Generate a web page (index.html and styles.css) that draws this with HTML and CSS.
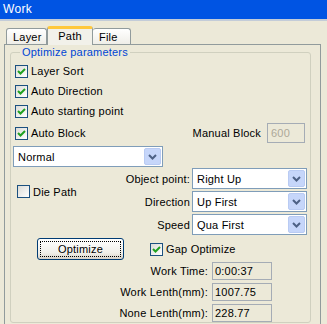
FILE: index.html
```html
<!DOCTYPE html>
<html lang="en">
<head>
    <meta charset="UTF-8">
    <title>Work</title>
    <link rel="stylesheet" href="styles.css">
</head>
<body>

    <div class="titlebar">Work</div>

    <div class="tabs">
        <div class="tab">Layer</div>
        <div class="tab active">Path</div>
        <div class="tab">File</div>
    </div>

    <div class="panel">
        <fieldset class="group">
            <legend>Optimize parameters</legend>

            <label class="check-row"><span class="box checked"></span>Layer Sort</label>
            <label class="check-row"><span class="box checked"></span>Auto Direction</label>
            <label class="check-row"><span class="box checked"></span>Auto starting point</label>
            <div class="check-row block-row">
                <label class="check-row"><span class="box checked"></span>Auto Block</label>
                <div class="manual">
                    <span>Manual Block</span>
                    <span class="field disabled">600</span>
                </div>
            </div>

            <div class="combo normal">Normal<span class="drop"></span></div>

            <div class="path-section">
                <label class="check-row die"><span class="box"></span>Die Path</label>
                <div class="opt-grid">
                    <span class="lbl">Object point:</span>
                    <div class="combo">Right Up<span class="drop"></span></div>
                    <span class="lbl">Direction</span>
                    <div class="combo">Up First<span class="drop"></span></div>
                    <span class="lbl">Speed</span>
                    <div class="combo">Qua First<span class="drop"></span></div>
                </div>
            </div>

            <div class="optimize-row">
                <button class="btn"><span>Optimize</span></button>
                <label class="check-row"><span class="box checked"></span>Gap Optimize</label>
            </div>

            <div class="stats">
                <span class="lbl">Work Time:</span>
                <span class="field">0:00:37</span>
                <span class="lbl">Work Lenth(mm):</span>
                <span class="field">1007.75</span>
                <span class="lbl">None Lenth(mm):</span>
                <span class="field">228.77</span>
            </div>
        </fieldset>
    </div>

</body>
</html>
```

FILE: styles.css
```css
body, html {
    margin: 0;
    padding: 0;
    width: 327px;
    height: 324px;
    overflow: hidden;
    background-color: #ece9d8;
    font-family: "Liberation Sans", Arial, sans-serif;
    font-size: 11px;
    letter-spacing: 0.2px;
    color: #000;
}

.titlebar {
    height: 19px;
    line-height: 19px;
    padding-left: 3px;
    background-color: #0054e3;
    color: #fff;
    font-size: 12px;
    letter-spacing: 0.3px;
    border-bottom: 2px solid #c3ccd8;
}

/* tab strip */
.tabs {
    display: flex;
    align-items: flex-end;
    height: 19px;
    margin-top: 4px;
    padding-left: 6px;
}

.tab {
    height: 16px;
    line-height: 16px;
    padding: 0 6px;
    border: 1px solid #919b9c;
    border-bottom: none;
    border-radius: 3px 3px 0 0;
    background: linear-gradient(#ffffff, #efeee8);
    box-sizing: border-box;
}

.tab:first-child {
    width: 41px;
}

.tab:last-child {
    width: 38px;
    border-left: none;
}

.tab.active {
    width: 46px;
    height: 19px;
    line-height: 15px;
    text-align: center;
    border-top: 3px solid #ffc83c;
    background: #f2f1ea;
    position: relative;
    top: 1px;
    z-index: 2;
}

.panel {
    width: 317px;
    height: 290px;
    margin-left: 4px;
    border: 1px solid #919b9c;
    box-sizing: border-box;
    padding: 1px 0 0 5px;
}

.group {
    width: 301px;
    margin: 0;
    padding: 0 5px 0 4px;
    border: 1px solid #d0d0bf;
    border-radius: 3px;
    box-sizing: border-box;
    min-width: 0;
}

.group legend {
    color: #0046d5;
    line-height: 13px;
    padding: 0 2px;
    margin-left: 5px;
}

.check-row {
    display: flex;
    align-items: center;
    height: 20px;
}

.group > .check-row:first-of-type {
    margin-top: 2px;
}

.box {
    width: 13px;
    height: 13px;
    margin-right: 3px;
    border: 1px solid #1c5180;
    box-sizing: border-box;
    background: linear-gradient(135deg, #dcdcd7, #ffffff);
    flex-shrink: 0;
}

.box.checked {
    background-image: url("data:image/svg+xml,%3Csvg xmlns='http://www.w3.org/2000/svg' width='11' height='11'%3E%3Cpath d='M2 5 L4.5 7.5 L9 3' fill='none' stroke='%2321a121' stroke-width='2'/%3E%3C/svg%3E"), linear-gradient(135deg, #dcdcd7, #ffffff);
    background-repeat: no-repeat;
}

.block-row {
    justify-content: space-between;
}

.manual {
    display: flex;
    align-items: center;
    gap: 6px;
}

.field {
    display: block;
    height: 20px;
    line-height: 18px;
    padding: 0 3px;
    border: 1px solid #a5acb5;
    box-sizing: border-box;
    background: #ece9d8;
}

.manual .field {
    width: 38px;
}

.field.disabled {
    color: #aca899;
}

.combo {
    display: flex;
    align-items: center;
    justify-content: space-between;
    height: 21px;
    padding-left: 4px;
    border: 1px solid #7f9db9;
    box-sizing: border-box;
    background: #fff;
}

.combo .drop {
    width: 17px;
    height: 17px;
    margin-right: 1px;
    border-radius: 2px;
    box-sizing: border-box;
    border: 1px solid #b9cbf3;
    background-color: #c6d6fa;
    background-image: url("data:image/svg+xml,%3Csvg xmlns='http://www.w3.org/2000/svg' width='15' height='15'%3E%3Cpath d='M4 6 L7.5 9.5 L11 6' fill='none' stroke='%234d6185' stroke-width='2'/%3E%3C/svg%3E");
    background-repeat: no-repeat;
}

.combo.normal {
    width: 150px;
    margin: 3px 0 0 -2px;
}

.path-section {
    display: flex;
    justify-content: space-between;
    margin: 1px -2px 0 0;
}

.die {
    margin: 17px 0 0 2px;
    height: 13px;
}

.opt-grid {
    display: grid;
    grid-template-columns: auto 115px;
    column-gap: 2px;
    row-gap: 2px;
    align-items: center;
}

.lbl {
    text-align: right;
}

.optimize-row {
    display: flex;
    align-items: center;
    margin-top: 3px;
    padding-left: 22px;
}

.btn {
    width: 87px;
    height: 22px;
    padding: 2px;
    margin-right: 26px;
    border: 1px solid #003c74;
    border-radius: 3px;
    background: linear-gradient(#ffffff, #f0efe9 70%, #d6d0c5);
    font-family: inherit;
    font-size: 11px;
    letter-spacing: 0.2px;
    color: #000;
}

.btn span {
    display: block;
    height: 100%;
    line-height: 14px;
    border: 1px dotted #000;
    box-sizing: border-box;
}

.optimize-row .check-row {
    height: 13px;
}

.stats {
    display: grid;
    grid-template-columns: 193px 60px;
    column-gap: 4px;
    row-gap: 3px;
    margin-top: 2px;
    align-items: center;
}

.stats .field {
    height: 18px;
    line-height: 16px;
    padding: 0 2px;
}
```
